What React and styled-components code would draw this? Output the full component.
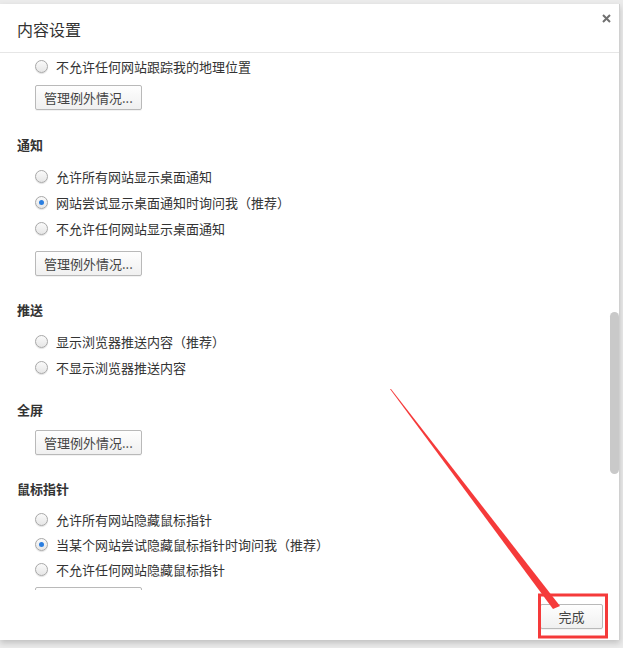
import React from "react";
import styled, { createGlobalStyle } from "styled-components";

const Global = createGlobalStyle`
  html, body { margin: 0; padding: 0; }
  body {
    background: #ebebeb;
    font-family: "Noto Sans CJK SC", "Noto Sans", sans-serif;
    color: #333;
    width: 623px;
    height: 648px;
    overflow: hidden;
  }
`;

const Dialog = styled.div`
  position: relative;
  margin-top: 4px;
  width: 619px;
  height: 636px;
  background: #fff;
  border-right: 1px solid #d0d0d0;
  box-shadow: 0 3px 6px rgba(0, 0, 0, 0.18);
  display: flex;
  flex-direction: column;
`;

const Header = styled.div`
  height: 48px;
  border-bottom: 1px solid #e6e6e6;
  display: flex;
  align-items: center;
  padding-left: 17px;
  position: relative;
`;

const Title = styled.h1`
  margin: 0;
  font-size: 16px;
  font-weight: normal;
  color: #333;
  line-height: 20px;
  padding-top: 2px;
`;

const Close = styled.button`
  position: absolute;
  right: 6px;
  top: 7px;
  border: 0;
  background: none;
  padding: 0;
  width: 14px;
  height: 14px;
  display: flex;
  align-items: center;
  justify-content: center;
`;

const Scroll = styled.div`
  position: relative;
  flex: 0 0 537px;
  overflow: hidden;
`;

const Thumb = styled.div`
  position: absolute;
  right: 0px;
  top: 259px;
  width: 9px;
  height: 162px;
  border-radius: 5px;
  background: #c9c9c9;
`;

const Section = styled.section`
  display: flex;
  flex-direction: column;
  align-items: flex-start;
  margin-bottom: ${(p) => p.$gap ?? 19}px;
`;

const Heading = styled.h2`
  margin: 0 0 8px 17px;
  font-size: 13px;
  font-weight: bold;
  line-height: 20px;
  color: #333;
`;

const Row = styled.label`
  display: flex;
  align-items: center;
  height: ${(p) => p.$h ?? 26}px;
  padding-left: 35px;
  gap: 8px;
  font-size: 13px;
  color: #333;
`;

const Radio = styled.span`
  box-sizing: border-box;
  width: 13px;
  height: 13px;
  border-radius: 50%;
  border: 1px solid #a8a8a8;
  background: linear-gradient(#fafafa, #e6e6e6);
  box-shadow: 0 1px 1px rgba(0, 0, 0, 0.12);
  display: flex;
  align-items: center;
  justify-content: center;
  &::after {
    content: "";
    width: 5px;
    height: 5px;
    border-radius: 50%;
    background: ${(p) => (p.$on ? "#2a7ee0" : "transparent")};
  }
`;

const Btn = styled.button`
  box-sizing: border-box;
  margin: ${(p) => p.$m ?? "10px 0 5px 35px"};
  height: 25px;
  padding: 0 8px;
  border: 1px solid #b9b9b9;
  border-radius: 2px;
  background: linear-gradient(#fefefe, #f0f0f0);
  box-shadow: 0 1px 0 rgba(0, 0, 0, 0.05);
  font-family: "Noto Sans CJK SC", sans-serif;
  font-size: 13px;
  color: #444;
  line-height: 21px;
  flex-shrink: 0;
`;

const Footer = styled.div`
  flex: 1;
  display: flex;
  justify-content: flex-end;
  align-items: flex-start;
  padding: 14px 16px 0 0;
`;

const DoneBtn = styled(Btn)`
  margin: 0;
  width: 63px;
  padding: 0;
`;

const Annot = styled.svg`
  position: absolute;
  left: 0;
  top: 0;
  pointer-events: none;
`;

const Item = ({ on, children, h }) => (
  <Row $h={h}>
    <Radio $on={on} />
    <span>{children}</span>
  </Row>
);

export default function App() {
  return (
    <>
      <Global />
      <Dialog>
        <Header>
          <Title>内容设置</Title>
          <Close aria-label="关闭">
            <svg width="9" height="9" viewBox="0 0 9 9">
              <path d="M1 1 L8 8 M8 1 L1 8" stroke="#707070" strokeWidth="2" />
            </svg>
          </Close>
        </Header>
        <Scroll>
          <Section $gap={20}>
            <Item>不允许任何网站跟踪我的地理位置</Item>
            <Btn $m="6px 0 5px 35px">管理例外情况...</Btn>
          </Section>
          <Section>
            <Heading>通知</Heading>
            <Item>允许所有网站显示桌面通知</Item>
            <Item on>网站尝试显示桌面通知时询问我（推荐）</Item>
            <Item>不允许任何网站显示桌面通知</Item>
            <Btn>管理例外情况...</Btn>
          </Section>
          <Section $gap={20}>
            <Heading>推送</Heading>
            <Item>显示浏览器推送内容（推荐）</Item>
            <Item>不显示浏览器推送内容</Item>
          </Section>
          <Section>
            <Heading>全屏</Heading>
            <Btn $m="2px 0 5px 35px">管理例外情况...</Btn>
          </Section>
          <Section>
            <Heading>鼠标指针</Heading>
            <Item h={25}>允许所有网站隐藏鼠标指针</Item>
            <Item h={25} on>当某个网站尝试隐藏鼠标指针时询问我（推荐）</Item>
            <Item h={25}>不允许任何网站隐藏鼠标指针</Item>
            <Btn $m="5px 0 5px 35px">管理例外情况...</Btn>
          </Section>
          <Thumb />
        </Scroll>
        <Footer>
          <DoneBtn>完成</DoneBtn>
        </Footer>
      </Dialog>
      <Annot width="623" height="648" viewBox="0 0 623 648">
        <polygon points="390,389 391,389 560,606 553,609" fill="#f53a3a" />
        <rect x="539.5" y="595" width="67" height="42" fill="none" stroke="#f53a3a" strokeWidth="3" />
      </Annot>
    </>
  );
}
